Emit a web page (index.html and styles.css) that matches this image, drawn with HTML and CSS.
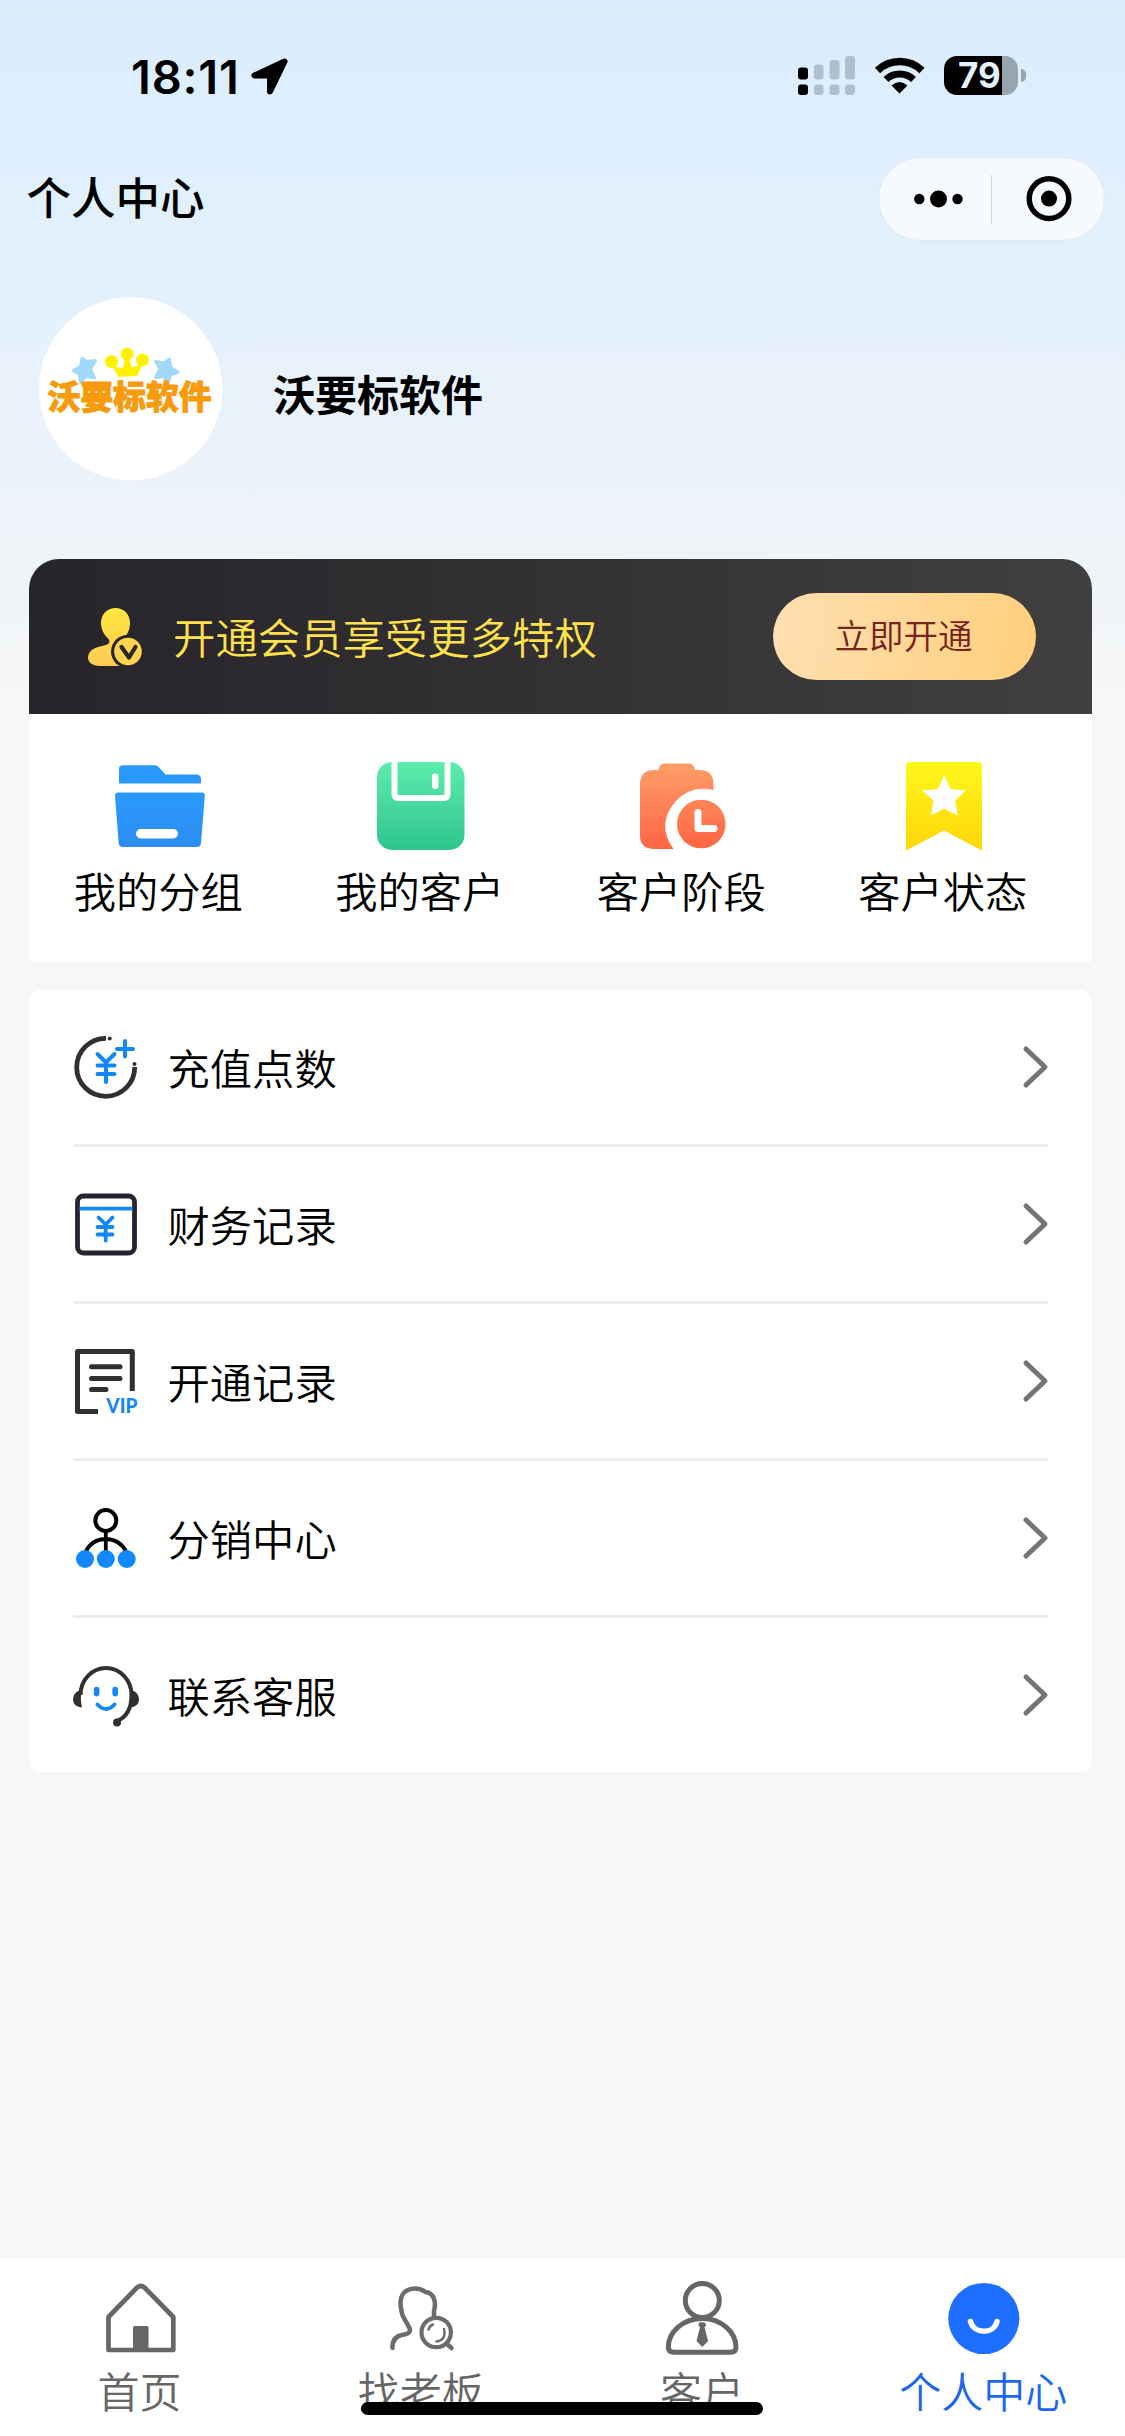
FILE: index.html
```html
<!DOCTYPE html>
<html lang="zh-CN">
<head>
<meta charset="utf-8">
<title>个人中心</title>
<link rel="stylesheet" href="styles.css">
</head>
<body>
<div class="page">
  <header class="status">
    <div class="clock">
      <span class="time">18:11</span>
      <svg class="locate" width="40" height="40" viewBox="250 57 40 40"><path d="M284.500 61.500 L254.500 75.500 H270 V91.500 Z" fill="#000" stroke="#000" stroke-width="6" stroke-linejoin="round"/></svg>
    </div>
    <div class="indicators">
      <svg width="58" height="40" viewBox="798 56 58 40">
        <g fill="#000"><rect x="798" y="67.500" width="10" height="12" rx="3"/><rect x="798" y="84.500" width="10" height="10.500" rx="3"/></g>
        <g fill="#afc0cd"><rect x="814" y="64.500" width="9.500" height="15" rx="3"/><rect x="829.500" y="60" width="10" height="19.500" rx="3"/><rect x="845" y="56" width="10" height="23.500" rx="3"/><rect x="814" y="84.500" width="9.500" height="10.500" rx="3"/><rect x="829.500" y="84.500" width="10" height="10.500" rx="3"/><rect x="845" y="84.500" width="10" height="10.500" rx="3"/></g>
      </svg>
      <svg width="52" height="40" viewBox="874 56 52 40">
        <path d="M877.500 70.500 A32 32 0 0 1 922 70.500" fill="none" stroke="#000" stroke-width="7.500"/>
        <path d="M886 79.500 A20 20 0 0 1 913.500 79.500" fill="none" stroke="#000" stroke-width="7"/>
        <path d="M891.500 85.500 Q899.500 78.500 907.500 85.500 L899.500 93.500 Z" fill="#000"/>
      </svg>
      <div class="battery"><span class="level">79</span><i class="nub"></i></div>
    </div>
  </header>

  <nav class="titlebar">
    <h1 class="title">个人中心</h1>
    <div class="capsule">
      <svg width="112" height="82" viewBox="879 158 112 82"><circle cx="919.300" cy="199" r="5.200"/><circle cx="938.500" cy="199" r="8.500"/><circle cx="957.500" cy="199" r="5.200"/></svg>
      <i class="capsule-line"></i>
      <svg width="112" height="82" viewBox="992 158 112 82"><circle cx="1049" cy="198.600" r="19.800" fill="none" stroke="#000" stroke-width="5.500"/><circle cx="1049" cy="198.600" r="8"/></svg>
    </div>
  </nav>

  <section class="profile">
    <svg class="avatar" width="184" height="184" viewBox="39 296.500 184 184">
      <circle cx="130.700" cy="388.300" r="91.700" fill="#fff"/>
      <g fill="#a1d9f9" stroke="#a1d9f9" stroke-width="3" stroke-linejoin="round">
        <path d="M82 358 L87 361 L95.500 360 L90.500 368.500 L94.500 377.500 L86.500 375.500 L80.500 382 L79.500 374 L73 370 L80.500 366 Z"/>
        <path d="M169.500 358.500 L164 362.500 L155.500 361 L160 368.500 L155.500 377 L163.500 376 L168.500 382.500 L170.500 374.500 L178 371.500 L171 367 Z"/>
      </g>
      <g fill="#fff200"><circle cx="111.500" cy="361" r="6.500"/><circle cx="127" cy="353.500" r="6.500"/><circle cx="142.500" cy="359.500" r="6.500"/>
      <path d="M112 365 L123 368 L124.500 358 H129 L132 367 L143 363 L137 375.500 L118.500 376.500 Z"/></g>
      <text class="logo-text" x="47.500" y="408.500" textLength="164" lengthAdjust="spacingAndGlyphs">沃要标软件</text>
    </svg>
    <h2 class="name">沃要标软件</h2>
  </section>

  <main class="content">
    <section class="card">
      <div class="vip">
        <svg width="58" height="62" viewBox="86 606 58 62">
          <defs><linearGradient id="gold" x1="0" y1="0" x2="0" y2="1"><stop offset="0" stop-color="#ffe640"/><stop offset="1" stop-color="#ffcb55"/></linearGradient></defs>
          <path d="M115.500 608 C124 608 130 614.500 130 623 C130 630 127 635 123.500 638.500 C121 641 122 644 125 645 L131 666 H100 C92 666 88 662 88 657.500 C88 650 96 647 104 645.500 C109 644.500 111 641.500 108 638.500 C103.500 634 101 629 101 623 C101 614.500 107 608 115.500 608 Z" fill="url(#gold)"/>
          <circle cx="127.500" cy="651.500" r="16.500" fill="#29262b"/>
          <circle cx="128" cy="651.500" r="13.800" fill="#ffd34f"/>
          <path d="M121.500 647 L129 657.500 L135.500 647" fill="none" stroke="#29262b" stroke-width="4.200" stroke-linecap="round" stroke-linejoin="round"/>
        </svg>
        <p class="vip-text">开通会员享受更多特权</p>
        <button class="vip-btn">立即开通</button>
      </div>
      <div class="grid">
        <a class="cell">
          <svg width="96" height="96" viewBox="113 758 96 96">
            <defs><linearGradient id="blue" x1="0" y1="0" x2="0" y2="1"><stop offset="0" stop-color="#2a9aff"/><stop offset="1" stop-color="#2c8cee"/></linearGradient></defs>
            <path d="M120 783.500 V769 Q120 765.300 124 765.300 H156 Q158.500 765.300 160 767.500 L166.500 774.500 H197 Q202 774.500 202 779 V783.500 Z" fill="#2a98fc"/>
            <path d="M119 792.500 H203 Q206 792.500 205.800 796 L202 843 Q201.500 847 198 847 H124 Q120 847 119.700 843 L116 796 Q116 792.500 119 792.500 Z" fill="url(#blue)"/>
            <rect x="137" y="829" width="42" height="9.500" rx="4.700" fill="#fff"/>
          </svg>
          <span>我的分组</span>
        </a>
        <a class="cell">
          <svg width="96" height="96" viewBox="373.500 758 96 96">
            <defs><linearGradient id="green" x1="0" y1="0" x2="0" y2="1"><stop offset="0" stop-color="#5cecad"/><stop offset="1" stop-color="#2fc48f"/></linearGradient></defs>
            <rect x="377.500" y="762" width="87.500" height="88" rx="15" fill="url(#green)"/>
            <path d="M395 760 V794 Q395 798 399 798 H444.500 Q448 798 448 794 V760" fill="none" stroke="#fff" stroke-width="6"/>
            <rect x="432.500" y="773.500" width="6.500" height="15.500" rx="3.200" fill="#fff"/>
          </svg>
          <span>我的客户</span>
        </a>
        <a class="cell">
          <svg width="96" height="96" viewBox="635 758 96 96">
            <defs><linearGradient id="orange" gradientUnits="userSpaceOnUse" x1="0" y1="763" x2="0" y2="849"><stop offset="0" stop-color="#ff9e69"/><stop offset="1" stop-color="#ff6543"/></linearGradient></defs>
            <path d="M664 763.500 H689 Q694 763.500 695 770 H701 Q713.500 771 713.500 784 V790 Q690 785 675 802 Q656 825 673.500 849 H653 Q640 848 640 836 V783 Q641 770 654 770 H658.500 Q659 764 664 763.500 Z" fill="url(#orange)"/>
            <circle cx="701.300" cy="824" r="24.300" fill="url(#orange)"/>
            <path d="M698 812.500 V828.500 H714" fill="none" stroke="#fff" stroke-width="7" stroke-linecap="round" stroke-linejoin="round"/>
          </svg>
          <span>客户阶段</span>
        </a>
        <a class="cell">
          <svg width="96" height="96" viewBox="896 758 96 96">
            <defs><linearGradient id="yellow" x1="0" y1="0" x2="0" y2="1"><stop offset="0" stop-color="#fdf71b"/><stop offset="1" stop-color="#ffd60a"/></linearGradient></defs>
            <path d="M909 762 H979 Q982 762 982 766 V850.500 L944 830.500 L906 850.500 V766 Q906 762 909 762 Z" fill="url(#yellow)"/>
            <path d="M944 775 L950.500 789 L966 790.500 L955 800.500 L957.800 815.500 L944 808.500 L931 815.500 L933.500 800.500 L922 790.500 L938 789 Z" fill="#fff"/>
          </svg>
          <span>客户状态</span>
        </a>
      </div>
    </section>

    <section class="list">
      <a class="row">
        <svg width="68" height="68" viewBox="72 1034 68 68">
          <path d="M106 1038.300 A29 29 0 1 0 134.700 1067" fill="none" stroke="#303030" stroke-width="4.800"/>
          <circle cx="109.700" cy="1038.500" r="2" fill="#303030"/><circle cx="134.500" cy="1064" r="2" fill="#303030"/>
          <path d="M97.500 1054 L106 1062.500 L114.500 1054 M106 1062.500 V1082 M97.500 1065.500 H114.500 M97.500 1074 H114.500 M117 1049 H133 M125 1041 V1056.500" fill="none" stroke="#1288f8" stroke-width="4" stroke-linecap="round"/>
        </svg>
        <span>充值点数</span>
        <svg class="arrow" width="30" height="50" viewBox="0 0 30 50"><path d="M8 7 L27 25 L8 43"/></svg>
      </a>
      <a class="row">
        <svg width="68" height="68" viewBox="72 1191 68 68">
          <rect x="77.500" y="1196" width="57" height="57" rx="6" fill="none" stroke="#262431" stroke-width="4.800"/>
          <path d="M79.500 1208.700 H132.500" stroke="#1288f8" stroke-width="3.700"/>
          <path d="M98.500 1217.500 L105.700 1224.500 L112.500 1217.500 M105.700 1224.500 V1240.500 M97.500 1227 H112.500 M97.500 1234.500 H112.500" fill="none" stroke="#1288f8" stroke-width="3.800" stroke-linecap="round"/>
        </svg>
        <span>财务记录</span>
        <svg class="arrow" width="30" height="50" viewBox="0 0 30 50"><path d="M8 7 L27 25 L8 43"/></svg>
      </a>
      <a class="row">
        <svg width="68" height="68" viewBox="72 1348 68 68">
          <path d="M98 1411.500 H77.500 V1351.500 H132.300 V1391" fill="none" stroke="#303030" stroke-width="5" stroke-linejoin="round"/>
          <path d="M91.500 1366.800 H120 M91.500 1378.500 H120 M91.500 1389.500 H106" stroke="#303030" stroke-width="5" stroke-linecap="round"/>
          <text class="vip-mark" x="106.300" y="1413" textLength="31" lengthAdjust="spacingAndGlyphs">VIP</text>
        </svg>
        <span>开通记录</span>
        <svg class="arrow" width="30" height="50" viewBox="0 0 30 50"><path d="M8 7 L27 25 L8 43"/></svg>
      </a>
      <a class="row">
        <svg width="68" height="68" viewBox="72 1505 68 68">
          <circle cx="105.800" cy="1520.500" r="10.500" fill="none" stroke="#000" stroke-width="4"/>
          <path d="M105.800 1531 V1552 M85.500 1552 Q92 1539 105.800 1539 Q119.500 1539 126.500 1552" fill="none" stroke="#000" stroke-width="3.800"/>
          <g fill="#1288fd"><circle cx="85" cy="1559" r="9"/><circle cx="105.800" cy="1559" r="9"/><circle cx="126.700" cy="1559" r="9"/></g>
        </svg>
        <span>分销中心</span>
        <svg class="arrow" width="30" height="50" viewBox="0 0 30 50"><path d="M8 7 L27 25 L8 43"/></svg>
      </a>
      <a class="row">
        <svg width="68" height="68" viewBox="72 1661 68 68">
          <path d="M80.500 1694 A25.500 27 0 0 1 131.500 1694 C131.500 1708 127 1716 117 1720" fill="none" stroke="#303030" stroke-width="4"/>
          <path d="M78 1690 Q73 1693 73 1699 Q73.500 1706 82 1706.500 Q80 1698 81.500 1690 Z M134 1690 Q139 1693 139 1699 Q138.500 1705 131 1706.500 Q133 1698 131 1690 Z" fill="#303030"/>
          <circle cx="117" cy="1721.500" r="4" fill="#303030"/>
          <g fill="#1288f8"><rect x="93.800" y="1685.800" width="5.600" height="9.600" rx="2.800"/><rect x="112.400" y="1685.800" width="5.600" height="9.600" rx="2.800"/></g>
          <path d="M97.500 1703.500 Q106 1712.500 114.500 1703.500" fill="none" stroke="#1288f8" stroke-width="4" stroke-linecap="round"/>
        </svg>
        <span>联系客服</span>
        <svg class="arrow" width="30" height="50" viewBox="0 0 30 50"><path d="M8 7 L27 25 L8 43"/></svg>
      </a>
    </section>
  </main>

  <footer class="tabs">
    <a class="tab">
      <svg width="80" height="80" viewBox="100.500 2279 80 80">
        <path d="M108 2350 V2317 L136.500 2287.500 Q140.300 2284.500 144 2287.500 L172.800 2317 V2350 Z" fill="none" stroke="#666" stroke-width="4.700" stroke-linejoin="round"/>
        <rect x="132.500" y="2326" width="15.500" height="24" rx="1.500" fill="#666"/>
      </svg>
      <span>首页</span>
    </a>
    <a class="tab">
      <svg width="80" height="80" viewBox="382 2279 80 80">
        <path d="M392.500 2348 C392 2339 397 2335.500 404 2334.500 C410 2333.500 411.500 2330 408.500 2326.500 C406 2320 402 2318 401.500 2311 C398 2296 404 2288.500 415.500 2288.500 C421 2288.500 423 2290 425.500 2292 C434 2293 436.500 2302 434 2311 V2318" fill="none" stroke="#6c6c6c" stroke-width="4.500" stroke-linecap="round" stroke-linejoin="round"/>
        <circle cx="436.200" cy="2332.500" r="14.700" fill="none" stroke="#6c6c6c" stroke-width="4.200"/>
        <path d="M447.500 2344.500 L451.500 2348" stroke="#6c6c6c" stroke-width="4.500" stroke-linecap="round"/>
        <path d="M428.500 2329.500 Q430 2325.500 433 2324.500 M444 2329 Q446.500 2340 436.500 2341.500" fill="none" stroke="#6c6c6c" stroke-width="2.500" stroke-linecap="round"/>
      </svg>
      <span>找老板</span>
    </a>
    <a class="tab">
      <svg width="80" height="80" viewBox="663 2279 80 80">
        <circle cx="702.300" cy="2300.500" r="17" fill="none" stroke="#666" stroke-width="5"/>
        <path d="M702.300 2318.500 C721 2318.500 736 2332 736 2347 Q736 2352.300 730.500 2352.300 H674 Q668.300 2352.300 668.300 2347 C668.300 2332 683 2318.500 702.300 2318.500 Z" fill="none" stroke="#666" stroke-width="5"/>
        <path d="M702.300 2322.500 A2.500 2.500 0 0 1 704.500 2327 L708 2341 L702.300 2347 L696.500 2341 L700 2327 A2.500 2.500 0 0 1 702.300 2322.500 Z" fill="#666"/>
      </svg>
      <span>客户</span>
    </a>
    <a class="tab active">
      <svg width="80" height="80" viewBox="944 2279 80 80">
        <circle cx="983.800" cy="2318.500" r="35.600" fill="#1e6fff"/>
        <path d="M970.500 2321.500 C974 2334.500 994 2334.500 997 2321.500" fill="none" stroke="#fff" stroke-width="5.500" stroke-linecap="round"/>
      </svg>
      <span>个人中心</span>
    </a>
    <i class="home-bar"></i>
  </footer>
</div>
</body>
</html>
```
FILE: styles.css
```css
* { box-sizing: border-box; }
body {
  margin: 0;
  font-family: "Noto Sans CJK SC", sans-serif;
  font-weight: 350;
  color: #000;
}
svg { display: block; flex: none; overflow: visible; }
.page {
  width: 1125px;
  height: 2436px;
  display: flex;
  flex-direction: column;
  overflow: hidden;
  background: linear-gradient(#daecfd 0, #e0f0fd 190px, #e5f1fb 330px, #ebf2fa 450px, #eff4f8 580px, #f7f7f7 700px);
}

/* status bar */
.status {
  height: 150px;
  padding: 55px 107px 0 131px;
  display: flex;
  justify-content: space-between;
  align-items: flex-start;
}
.clock { display: flex; gap: 9px; padding-top: 2px; }
.time {
  width: 110px;
  font: 600 47px/39px Inter, sans-serif;
  letter-spacing: 0.800px;
  white-space: nowrap;
}
.indicators { display: flex; gap: 18px; padding-top: 1px; }
.battery {
  position: relative;
  width: 74px;
  height: 39px;
  border-radius: 13px;
  background: linear-gradient(90deg, #000 79%, #97a5af 79%);
}
.level {
  display: block;
  padding-left: 14px;
  font: 700 35px/39px Inter, sans-serif;
  color: #e4f1fd;
}
.nub {
  position: absolute;
  right: -8px;
  top: 13px;
  width: 5px;
  height: 13px;
  border-radius: 0 5px 5px 0;
  background: #97a5af;
}

/* title bar */
.titlebar {
  height: 98px;
  padding: 7px 20px 0 26.500px;
  display: flex;
  justify-content: space-between;
  align-items: flex-start;
}
.title { margin: 0; padding-top: 7px; font-size: 44.500px; line-height: 64px; font-weight: 500; }
.capsule {
  width: 227px;
  height: 84px;
  display: flex;
  align-items: center;
  border: 1px solid #e3e8ee;
  border-radius: 42px;
  background: #f6faff;
}
.capsule-line { width: 1px; height: 49px; background: #cfd4da; }

/* profile */
.profile {
  height: 311px;
  padding: 49px 39px 0;
  display: flex;
  gap: 50px;
}
.name { margin: 64px 0 0; font-size: 42px; line-height: 64px; font-weight: 700; }
.logo-text {
  font-size: 33px;
  font-weight: 900;
  fill: #f79a0c;
  stroke: #f79a0c;
  stroke-width: 0.800px;
}

/* membership and shortcuts */
.content { flex: 1; padding: 0 33px 0 29px; }
.card { height: 402.500px; background: #fff; border-radius: 30px 30px 4px 4px; }
.vip {
  height: 155px;
  padding: 0 56px 0 57px;
  display: flex;
  align-items: center;
  border-radius: 30px 30px 0 0;
  background: linear-gradient(90deg, #27242a, #343134 50%, #413f3f);
}
.vip-text {
  flex: 1;
  margin: -3px 0 0 29px;
  font-size: 42.400px;
  color: #ffe14b;
}
.vip-btn {
  width: 263px;
  height: 87px;
  padding: 0 2px 5px 0;
  border: 0;
  border-radius: 44px;
  font: 350 34.500px "Noto Sans CJK SC", sans-serif;
  color: #78231b;
  background: linear-gradient(100deg, #ffdfb2, #ffcf7c);
}
.grid {
  margin-left: -2px;
  padding: 44px 0 0;
  display: grid;
  grid-template-columns: repeat(4, 261.500px);
}
.cell { display: flex; flex-direction: column; align-items: center; }
.cell svg { margin-left: 4px; }
.cell span { font-size: 42.300px; line-height: 64px; margin: 4px 0 0 1px; }

/* menu list */
.list {
  margin-top: 28.500px;
  height: 782px;
  padding: 0 44px;
  border-radius: 12px;
  background: #fff;
}
.row {
  height: 157px;
  display: flex;
  align-items: center;
  border-bottom: 3px solid #eee;
}
.row:last-child { border-bottom: 0; padding-bottom: 4px; }
.row svg { margin: 2px 0 0 -1px; }
.row span { flex: 1; margin-left: 27.500px; font-size: 42.300px; line-height: 64px; }
.row .arrow {
  margin: 0;
  fill: none;
  stroke: #757575;
  stroke-width: 5px;
  stroke-linecap: round;
  stroke-linejoin: round;
}
.vip-mark {
  font: 900 21px Lato, sans-serif;
  fill: #1288f8;
}

/* bottom tabs */
.tabs {
  position: relative;
  height: 177px;
  display: grid;
  grid-template-columns: repeat(4, 1fr);
  background: #fff;
}
.tab {
  padding-top: 20px;
  display: flex;
  flex-direction: column;
  align-items: center;
  color: #666;
}
.tab span { margin: -1px 0 0 -2px; font-size: 42px; line-height: 64px; }
.tab.active { color: #1c66f0; }
.home-bar {
  position: absolute;
  left: 361px;
  top: 143px;
  width: 402px;
  height: 13px;
  border-radius: 7px;
  background: #000;
}
```
